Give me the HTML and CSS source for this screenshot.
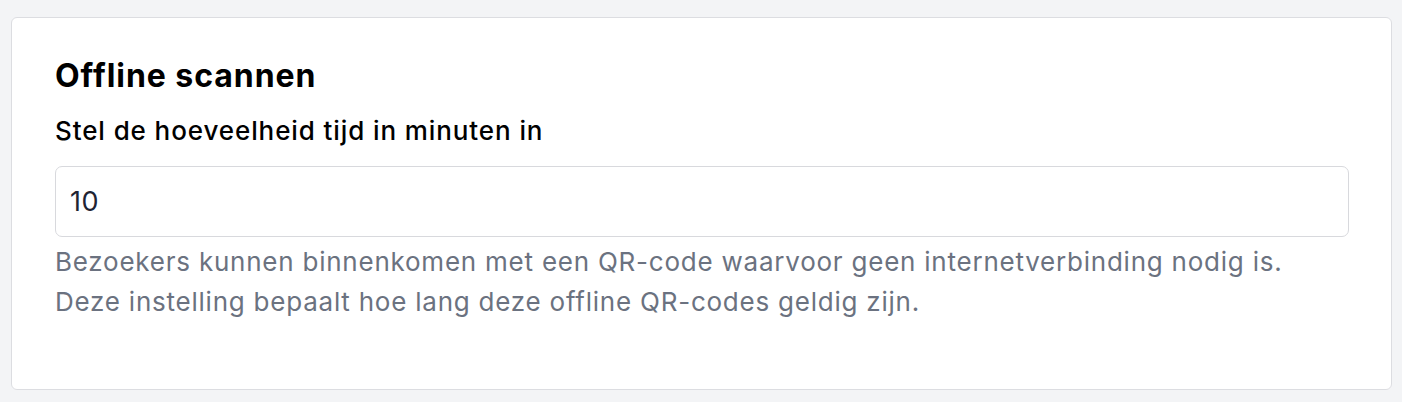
FILE: index.html
```html
<!DOCTYPE html>
<html lang="nl">
<head>
    <meta charset="UTF-8">
    <title>Offline scannen</title>
    <link rel="stylesheet" href="styles.css">
</head>
<body>
    <div class="page">
        <div class="card">
            <h2 class="card-title">Offline scannen</h2>
            <label class="field-label" for="offlineMinutes">Stel de hoeveelheid tijd in minuten in</label>
            <input class="field-input" id="offlineMinutes" type="text" value="10">
            <p class="field-help">
                Bezoekers kunnen binnenkomen met een QR-code waarvoor geen internetverbinding nodig is.<br>
                Deze instelling bepaalt hoe lang deze offline QR-codes geldig zijn.
            </p>
        </div>
    </div>
</body>
</html>
```

FILE: styles.css
```css
body {
    margin: 0;
    background: #f3f4f6;
    font-family: Inter, "Noto Sans", "Liberation Sans", sans-serif;
}

.page {
    padding: 17px 10px 12px 11px;
}

.card {
    background: #fff;
    border: 1px solid #dcdde1;
    border-radius: 6px;
    padding: 38px 42px 67px 43px;
}

.card-title {
    margin: 0;
    font-size: 32px;
    line-height: 40px;
    font-weight: 700;
    letter-spacing: 0.95px;
    color: #000;
}

.field-label {
    display: block;
    margin-top: 17px;
    font-size: 26px;
    line-height: 36px;
    font-weight: 500;
    letter-spacing: 0.9px;
    color: #000;
}

.field-input {
    display: block;
    box-sizing: border-box;
    width: 100%;
    height: 71px;
    margin-top: 17px;
    padding: 0 14px;
    border: 1px solid #d8d9dd;
    border-radius: 7px;
    font-family: inherit;
    font-size: 27px;
    letter-spacing: 0.5px;
    color: #1f2433;
    background: #fff;
}

.field-help {
    margin: 5px 0 0;
    font-size: 26px;
    line-height: 40px;
    letter-spacing: 0.77px;
    color: #6b7280;
}
```
